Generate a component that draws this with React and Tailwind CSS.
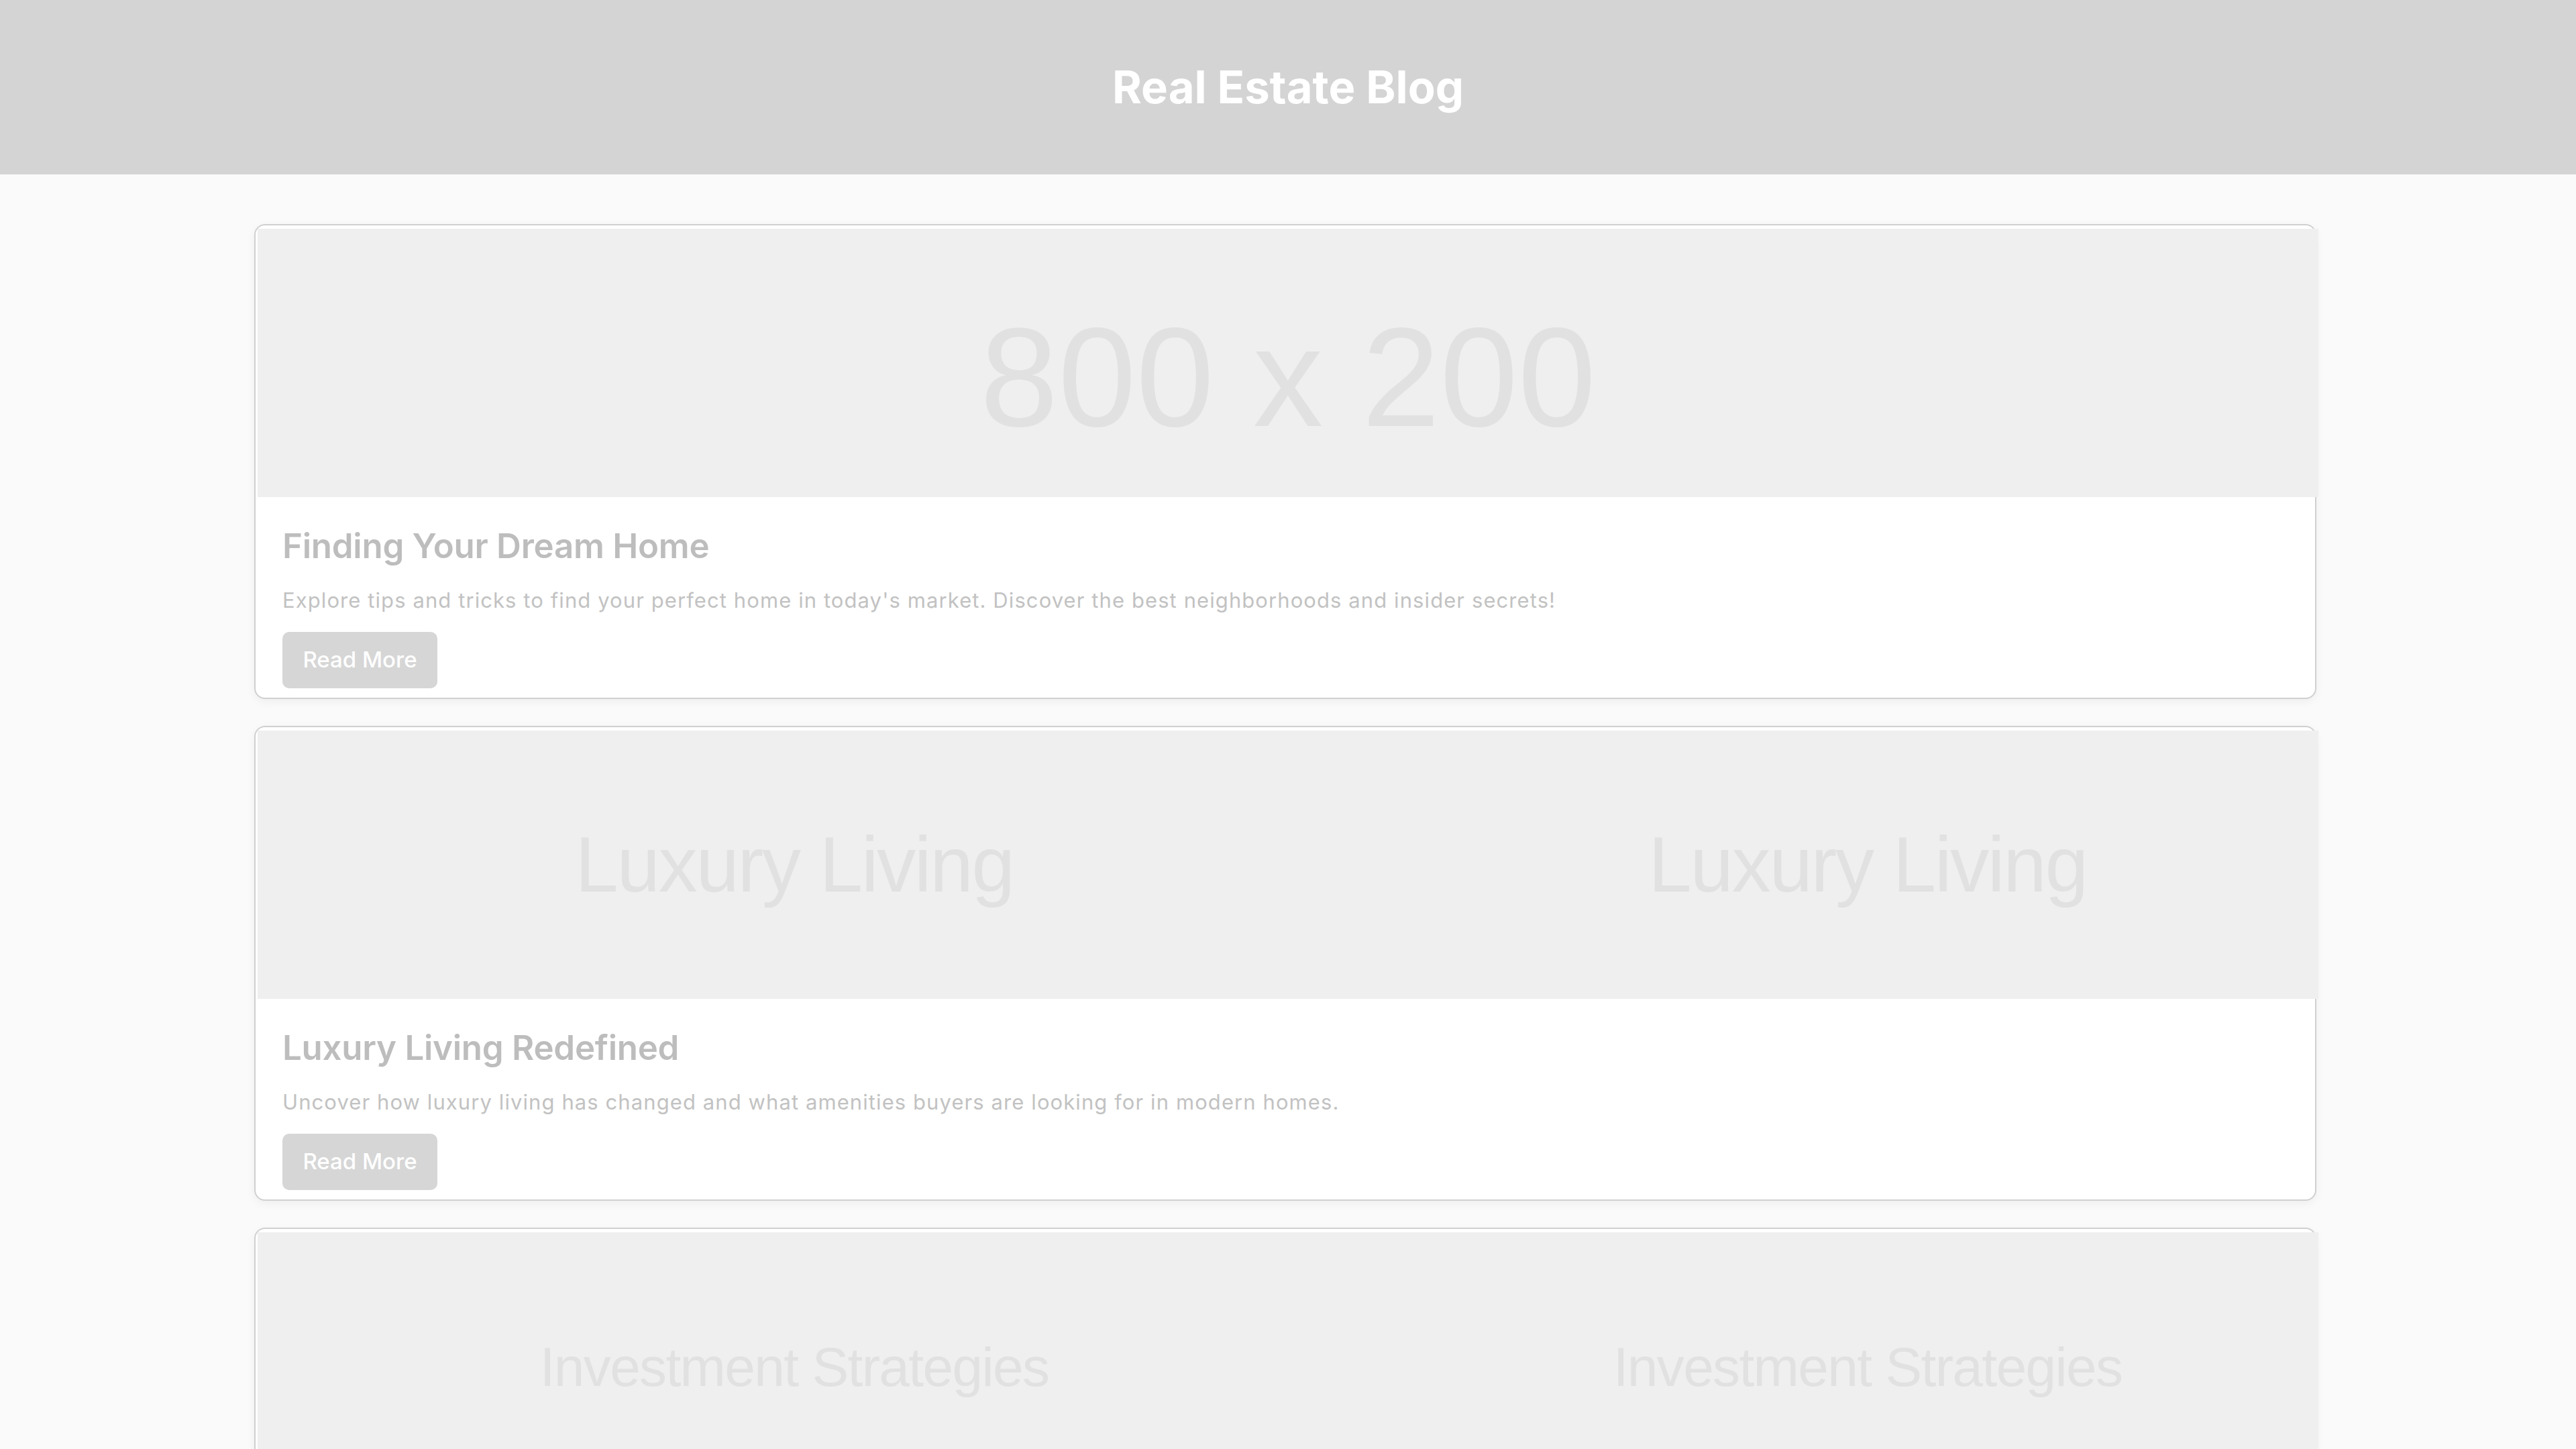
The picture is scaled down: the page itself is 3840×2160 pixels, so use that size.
import React from 'react';

// blog posts shown on the page
const posts = [
  {
    title: 'Finding Your Dream Home',
    text: "Explore tips and tricks to find your perfect home in today's market. Discover the best neighborhoods and insider secrets!",
    image: 'single',
    label: '800 x 200',
  },
  {
    title: 'Luxury Living Redefined',
    text: 'Uncover how luxury living has changed and what amenities buyers are looking for in modern homes.',
    image: 'tiled',
    label: 'Luxury Living',
  },
  {
    title: 'Investment Strategies',
    text: 'Learn the smartest ways to invest in real estate and grow your portfolio over time.',
    image: 'tiled',
    label: 'Investment Strategies',
  },
];

const PlaceholderImage = ({ image, label }) => {
  if (image === 'single') {
    return (
      <div className="ml-[3px] mt-[5px] w-[3072px] h-[400px] bg-[#efefef] flex items-center justify-center pt-[42px] overflow-hidden">
        <span className="font-['Liberation_Sans',Arial,sans-serif] text-[209px] leading-none text-[#e1e1e1]">{label}</span>
      </div>
    );
  }

  const size = label === 'Luxury Living' ? 'text-[116px]' : 'text-[82px]';

  return (
    <div className="ml-[3px] mt-[5px] w-[3072px] h-[400px] bg-[#efefef] flex overflow-hidden">
      {[0, 1].map((i) => (
        <div key={i} className="w-[1600px] h-[400px] shrink-0 flex items-center justify-center">
          <span className={`font-['Liberation_Sans',Arial,sans-serif] ${size} tracking-[-0.02em] text-[#e1e1e1]`}>{label}</span>
        </div>
      ))}
    </div>
  );
};

const PostCard = ({ post }) => {
  return (
    <div className="ml-[-5px] w-[3074px] bg-white border-2 border-[#d0d0d0] rounded-[16px] shadow-[0_4px_14px_rgba(0,0,0,0.05)]">
      <PlaceholderImage image={post.image} label={post.label} />
      <div className="px-[40px] pt-[44px] pb-[14px]">
        <h2 className="text-[51px] leading-[58px] font-semibold text-[#bdbdbd] tracking-[-0.005em]">{post.title}</h2>
        <p className="mt-[32px] text-[31px] leading-[40px] tracking-[0.035em] text-[#c2c2c2]">{post.text}</p>
        <button className="mt-[27px] h-[84px] w-[231px] rounded-[10px] bg-[#d6d6d6] text-white text-[33px] font-medium">
          Read More
        </button>
      </div>
    </div>
  );
};

const App = () => {
  return (
    <div className="min-h-screen bg-[#fafafa] font-['Inter','Noto_Sans',sans-serif]">
      <header className="h-[260px] bg-[#d4d4d4] flex items-center justify-center">
        <h1 className="text-white text-[67px] font-bold">Real Estate Blog</h1>
      </header>

      <main className="w-[3072px] mx-auto pt-[74px] flex flex-col gap-[40px] pb-[40px]">
        {posts.map((post) => (
          <PostCard key={post.title} post={post} />
        ))}
      </main>
    </div>
  );
};

export default App;
